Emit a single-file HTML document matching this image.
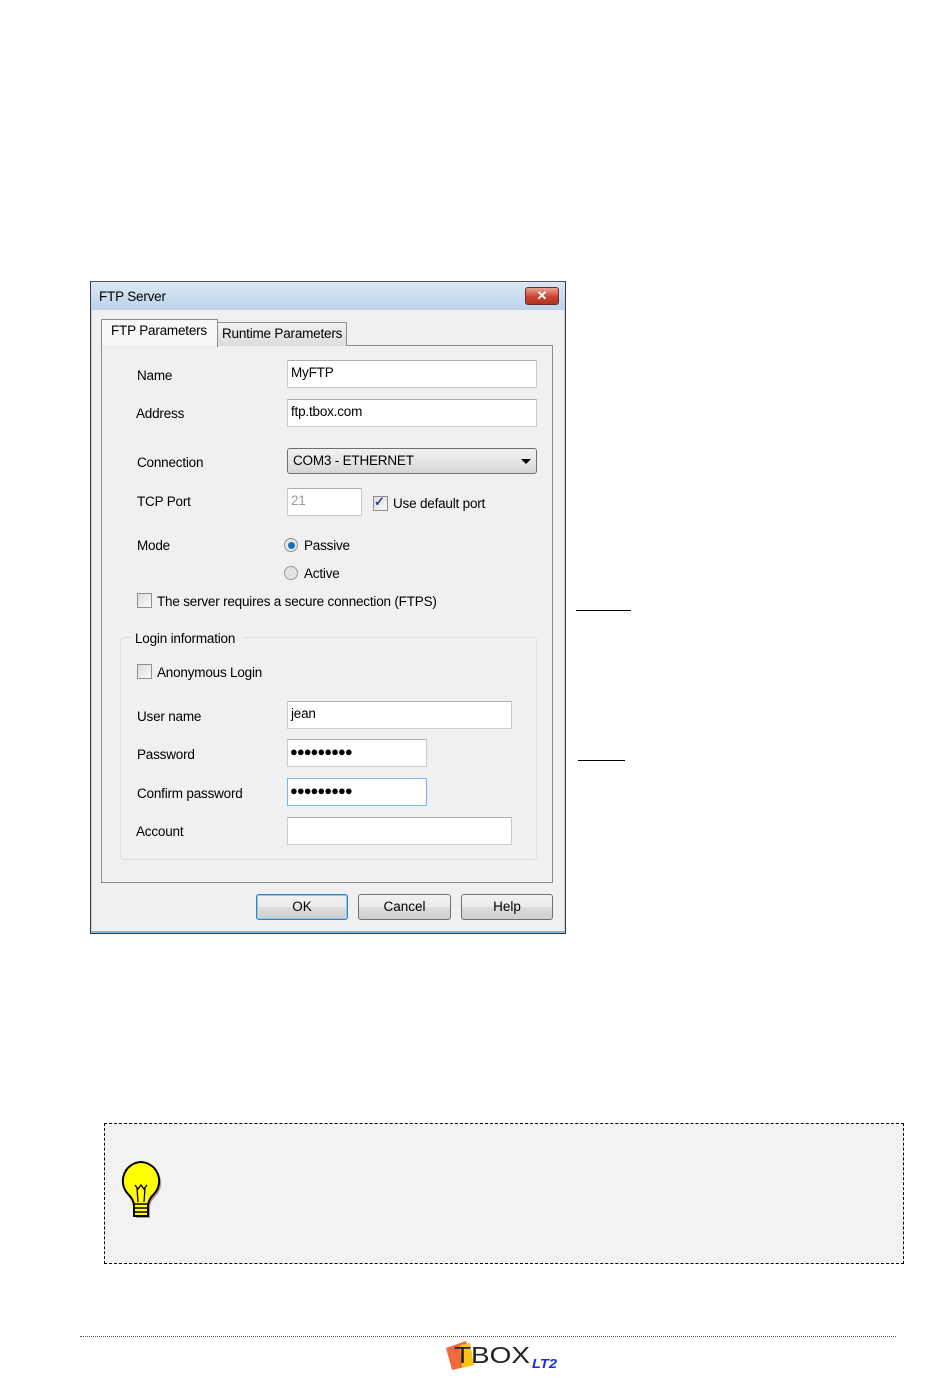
<!DOCTYPE html>
<html><head><meta charset="utf-8"><style>
*{margin:0;padding:0;box-sizing:border-box}
body{width:950px;height:1378px;background:#fff;position:relative;font-family:"Liberation Sans",sans-serif;font-size:13px;color:#000;overflow:hidden}
.a{position:absolute}
.t{position:absolute;white-space:nowrap;line-height:16px;font-size:13.5px;letter-spacing:-0.2px}
.in{position:absolute;background:#fff;border:1px solid #c9cbcf;border-top-color:#abadb3}
.cb{position:absolute;width:15px;height:15px;border:1px solid #8e8f8f;background:linear-gradient(135deg,#dcdcdc,#fafafa)}
.btn{position:absolute;height:26px;border:1px solid #707070;border-radius:3px;background:linear-gradient(#f2f2f2 0,#ebebeb 50%,#dddddd 51%,#cfcfcf 100%);text-align:center;line-height:24px;font-size:13.5px}
.pw{position:absolute;white-space:nowrap;font-size:13px;line-height:16px;letter-spacing:-1px;font-weight:bold}
</style></head><body>
<div class="a" style="left:90px;top:281px;width:476px;height:653px;border:1px solid #3a3a3a;border-top-color:#555;background:#f0f0f0"></div>
<div class="a" style="left:91px;top:282px;width:474px;height:28px;background:linear-gradient(#dbe8f5,#bcd3ea)"></div>
<div class="a" style="left:91px;top:310px;width:474px;height:623px;border-left:1px solid #bcd3ea;border-right:1px solid #bcd3ea;border-bottom:2px solid #7fb6d9"></div>
<div class="t" style="left:99px;top:289px">FTP Server</div>
<div class="a" style="left:525px;top:287px;width:34px;height:18px;border:1px solid #6d2b22;border-radius:3px;background:linear-gradient(#e9a494,#c9442f 55%,#b23620);color:#fff;font-weight:bold;text-align:center;line-height:16px;font-size:13px">✕</div>
<div class="a" style="left:101px;top:345px;width:452px;height:538px;border:1px solid #898c95;background:#fff"></div>
<div class="a" style="left:102px;top:346px;width:450px;height:536px;background:#f0f0f0"></div>
<div class="a" style="left:217px;top:322px;width:130px;height:24px;border:1px solid #898c95;border-bottom:none;background:linear-gradient(#f2f2f2,#dcdcdc)"></div>
<div class="t" style="left:222px;top:326px">Runtime Parameters</div>
<div class="a" style="left:101px;top:319px;width:117px;height:28px;border:1px solid #898c95;border-bottom:none;background:#f7f7f7"></div>
<div class="a" style="left:102px;top:345px;width:115px;height:3px;background:#f0f0f0"></div>
<div class="t" style="left:111px;top:323px">FTP Parameters</div>
<div class="t" style="left:137px;top:368px">Name</div>
<div class="in" style="left:287px;top:360px;width:250px;height:28px"></div>
<div class="t" style="left:291px;top:365px">MyFTP</div>
<div class="t" style="left:136px;top:406px">Address</div>
<div class="in" style="left:287px;top:399px;width:250px;height:28px"></div>
<div class="t" style="left:291px;top:404px">ftp.tbox.com</div>
<div class="t" style="left:137px;top:455px">Connection</div>
<div class="a" style="left:287px;top:448px;width:250px;height:26px;border:1px solid #707070;border-radius:3px;background:linear-gradient(#f2f2f2,#e6e6e6 50%,#d6d6d6)"></div>
<div class="t" style="left:293px;top:453px">COM3 - ETHERNET</div>
<div class="a" style="left:521px;top:459px;border-left:5px solid transparent;border-right:5px solid transparent;border-top:5px solid #000"></div>
<div class="t" style="left:137px;top:494px">TCP Port</div>
<div class="in" style="left:287px;top:488px;width:75px;height:28px"></div>
<div class="t" style="left:291px;top:493px;color:#9a9a9a">21</div>
<div class="cb" style="left:373px;top:496px"></div>
<div class="t" style="left:374px;top:494px;color:#2346a8;font-weight:bold;font-size:13px">✓</div>
<div class="t" style="left:393px;top:496px">Use default port</div>
<div class="t" style="left:137px;top:538px">Mode</div>
<div class="a" style="left:284px;top:538px;width:14px;height:14px;border-radius:50%;border:1px solid #8e8f8f;background:#e8e8e8"></div>
<div class="a" style="left:288px;top:542px;width:7px;height:7px;border-radius:50%;background:#1a6fb4"></div>
<div class="t" style="left:304px;top:538px">Passive</div>
<div class="a" style="left:284px;top:566px;width:14px;height:14px;border-radius:50%;border:1px solid #9a9a9a;background:#e4e4e4"></div>
<div class="t" style="left:304px;top:566px">Active</div>
<div class="cb" style="left:137px;top:593px"></div>
<div class="t" style="left:157px;top:594px">The server requires a secure connection (FTPS)</div>
<div class="a" style="left:120px;top:637px;width:417px;height:223px;border:1px solid #d5dfe5;border-radius:3px"></div>
<div class="a" style="left:131px;top:630px;width:112px;height:14px;background:#f0f0f0"></div>
<div class="t" style="left:135px;top:631px">Login information</div>
<div class="cb" style="left:137px;top:664px"></div>
<div class="t" style="left:157px;top:665px">Anonymous Login</div>
<div class="t" style="left:137px;top:709px">User name</div>
<div class="in" style="left:287px;top:701px;width:225px;height:28px"></div>
<div class="t" style="left:291px;top:706px">jean</div>
<div class="t" style="left:137px;top:747px">Password</div>
<div class="in" style="left:287px;top:739px;width:140px;height:28px"></div>
<div class="pw" style="left:290px;top:744px">●●●●●●●●●</div>
<div class="t" style="left:137px;top:786px">Confirm password</div>
<div class="in" style="left:287px;top:778px;width:140px;height:28px;border-color:#7eb4ea"></div>
<div class="pw" style="left:290px;top:783px">●●●●●●●●●</div>
<div class="t" style="left:136px;top:824px">Account</div>
<div class="in" style="left:287px;top:817px;width:225px;height:28px"></div>
<div class="btn" style="left:256px;top:894px;width:92px;border-color:#3c7fb1;box-shadow:inset 0 0 0 1px #7fd0f5">OK</div>
<div class="btn" style="left:358px;top:894px;width:93px">Cancel</div>
<div class="btn" style="left:461px;top:894px;width:92px">Help</div>
<div class="a" style="left:576px;top:610px;width:55px;height:1px;background:#000"></div>
<div class="a" style="left:578px;top:760px;width:47px;height:1px;background:#000"></div>
<div class="a" style="left:104px;top:1123px;width:800px;height:141px;border:1px dashed #000;background:#f2f2f2"></div>
<svg class="a" style="left:118px;top:1160px" width="48" height="66" viewBox="0 0 48 66">
<path d="M25 4a19 19 0 0 1 13 32c-4 4-6 8-6 12v10h-14v-10c0-4-2-8-6-12A19 19 0 0 1 25 4z" fill="#b79696"/>
<path d="M23 2a19 19 0 0 1 13 32c-4 4-6 8-6 12v10h-14v-10c0-4-2-8-6-12A19 19 0 0 1 23 2z" fill="#ff0" stroke="#000" stroke-width="2"/>
<path d="M17 25l3 4 3-4 3 4 3-4M19 28l1 14M27 28l-1 14" fill="none" stroke="#000" stroke-width="1.3"/>
<path d="M16 44h14M16 48h14M16 52h14" stroke="#000" stroke-width="1.5"/>
</svg>
<div class="a" style="left:80px;top:1336px;width:816px;border-top:1px dotted #555"></div>
<svg class="a" style="left:444px;top:1339px" width="116" height="34" viewBox="0 0 116 34">
<polygon points="2,9 22,2 30,26 8,31" fill="#ef6a3c"/>
<polygon points="16,6 26,4 30,26 18,29" fill="#fdc21a"/>
<text x="10" y="24" font-family="Liberation Sans,sans-serif" font-size="23" fill="#222" textLength="76" lengthAdjust="spacingAndGlyphs">TBOX</text>
<text x="88" y="29" font-family="Liberation Sans,sans-serif" font-size="13" font-weight="bold" font-style="italic" fill="#1a2ee8" textLength="25" lengthAdjust="spacingAndGlyphs">LT2</text>
</svg>
</body></html>
